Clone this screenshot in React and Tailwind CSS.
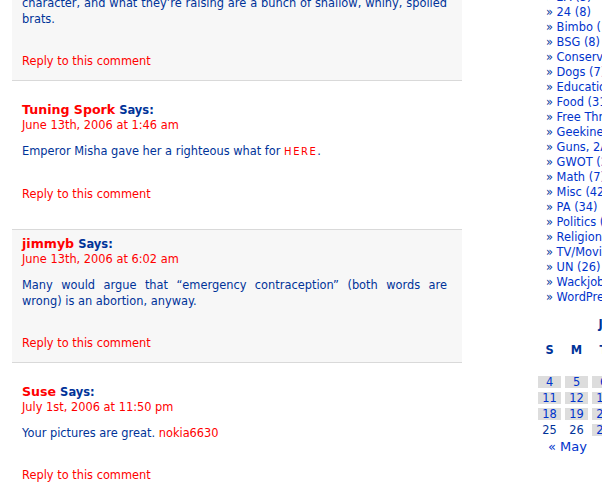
const categories = [
  '2A (5)',
  '24 (8)',
  'Bimbo (10)',
  'BSG (8)',
  'Conservatism (44)',
  'Dogs (7)',
  'Education (19)',
  'Food (31)',
  'Free Thread (12)',
  'Geekiness (23)',
  'Guns, 2A (40)',
  'GWOT (212)',
  'Math (7)',
  'Misc (422)',
  'PA (34)',
  'Politics (311)',
  'Religion (58)',
  'TV/Movies (27)',
  'UN (26)',
  'Wackjobs (61)',
  'WordPress (9)',
];

const weeks = [
  [null, null, null, null, 1, 2, 3],
  [4, 5, 6, 7, 8, 9, 10],
  [11, 12, 13, 14, 15, 16, 17],
  [18, 19, 20, 21, 22, 23, 24],
  [25, 26, 27, 28, 29, 30, null],
];

const linked = [4, 5, 6, 11, 12, 13, 18, 19, 20, 27, 28];

function Comment({ alt, name, date, children, first }) {
  return (
    <li
      className={
        'border-b border-[#d9d9d9] pl-[10px] pr-[15px] ' +
        (alt ? 'bg-[#f7f7f7] pt-[6px] pb-[11px]' : 'bg-white pt-[21px] pb-[27px]')
      }
    >
      {!first && (
        <>
          <div className="h-[16px] whitespace-nowrap text-[12.6px] leading-[16px]">
            <span className="font-bold text-[#ff0000]">{name}</span>{' '}
            <span className="text-[11.5px] font-bold text-[#003399]">Says:</span>
          </div>
          <div className="h-[14px] text-[11.4px] leading-[14px] text-[#ff0000]">{date}</div>
        </>
      )}
      <p
        className={
          'text-justify text-[11.4px] leading-[16px] text-[#003399] ' + (first ? '' : 'mt-[11px]')
        }
      >
        {children}
      </p>
      <p className="mt-[26px] text-[11.4px] leading-[16px] text-[#ff0000]">Reply to this comment</p>
    </li>
  );
}

export default function App() {
  return (
    <div className="h-[504px] w-[602px] overflow-hidden bg-white font-['DejaVu_Sans',Verdana,sans-serif]">
      <div className="-mt-[11px] flex pl-[12px]">
        <ol className="w-[450px] shrink-0">
          <Comment alt first>
            character, and what they’re raising are a bunch of shallow, whiny, spoiled brats.
          </Comment>
          <Comment name="Tuning Spork" date="June 13th, 2006 at 1:46 am">
            Emperor Misha gave her a righteous what for{' '}
            <span className="text-[10px] tracking-[1.5px] text-[#ff0000]">HERE</span>.
          </Comment>
          <Comment alt name="jimmyb" date="June 13th, 2006 at 6:02 am">
            Many would argue that “emergency contraception” (both words are wrong) is an abortion,
            anyway.
          </Comment>
          <Comment name="Suse" date="July 1st, 2006 at 11:50 pm">
            Your pictures are great. <span className="text-[#ff0000]">nokia6630</span>
          </Comment>
        </ol>

        <div className="ml-[76px] w-[200px] shrink-0">
          <ul className="mt-[1px] pl-[8px] text-[11.4px] leading-[15px]">
            {categories.map((c) => (
              <li key={c} className="whitespace-nowrap text-[#003399]">
                » <span className="text-[#0033cc]">{c}</span>
              </li>
            ))}
          </ul>

          <div className="mt-[12px] w-[185px]">
            <div className="text-center text-[11.4px] font-bold leading-[14px] text-[#003399]">
              June 2006
            </div>
            <div className="mt-[13px] grid grid-cols-[repeat(7,23px)] auto-rows-[12px] gap-[4px] text-center text-[11.4px] leading-[12px]">
              {['S', 'M', 'T', 'W', 'T', 'F', 'S'].map((d, i) => (
                <div key={i} className="font-bold text-[#003399]">
                  {d}
                </div>
              ))}
              {weeks.flat().map((d, i) => (
                <div
                  key={i}
                  className={linked.includes(d) ? 'bg-[#dddddd] text-[#0033cc]' : 'text-[#003399]'}
                >
                  {d}
                </div>
              ))}
            </div>
            <div className="mt-[3px] pl-[10px] text-[13px] leading-[16px] text-[#0033cc]">« May</div>
          </div>
        </div>
      </div>
    </div>
  );
}
